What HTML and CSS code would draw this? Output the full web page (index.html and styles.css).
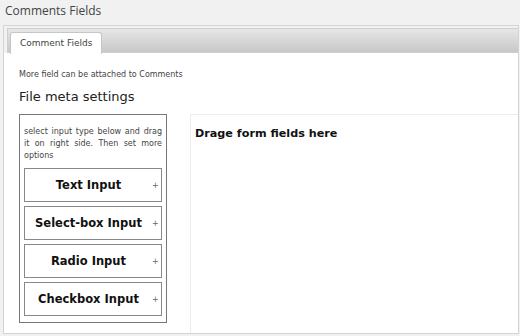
FILE: index.html
```html
<!DOCTYPE html>
<html lang="en">
<head>
  <meta charset="UTF-8">
  <title>Comments Fields</title>
  <link rel="stylesheet" href="styles.css">
</head>
<body>
  <h1 class="page-title">Comments Fields</h1>

  <div class="wrap">
    <div class="tabs-head">
      <ul class="tabs-nav">
        <li class="tab active">Comment Fields</li>
      </ul>
    </div>

    <div class="panel">
      <p class="note">More field can be attached to Comments</p>
      <h3 class="section-title">File meta settings</h3>

      <div class="builder">
        <div class="field-list">
          <p class="help">select input type below and drag it on right side. Then set more options</p>
          <div class="field-btn"><span class="label">Text Input</span><span class="plus">+</span></div>
          <div class="field-btn"><span class="label">Select-box Input</span><span class="plus">+</span></div>
          <div class="field-btn"><span class="label">Radio Input</span><span class="plus">+</span></div>
          <div class="field-btn"><span class="label">Checkbox Input</span><span class="plus">+</span></div>
        </div>

        <div class="drop-zone">
          <h4>Drage form fields here</h4>
        </div>
      </div>
    </div>
  </div>
</body>
</html>
```

FILE: styles.css
```css
body {
  margin: 0;
  background: #f1f1f1;
  font-family: 'DejaVu Sans', Verdana, sans-serif;
  color: #333;
  overflow: hidden;
}
.page-title {
  margin: 0;
  height: 25px;
  padding-left: 5px;
  font-family: 'Open Sans', sans-serif;
  font-size: 12px;
  font-weight: 400;
  line-height: 21px;
  color: #444;
}
.wrap {
  margin: 0 1px 0 3px;
  height: 307px;
  border: 1px solid #d4d4d4;
  background: #fff;
  overflow: hidden;
}
.tabs-head {
  background: #f1f1f1;
  padding: 2px 0 0 3px;
}
.tabs-nav {
  list-style: none;
  margin: 0;
  height: 21px;
  padding: 2px 2px 0;
  border: 1px solid #cfcfcf;
  border-right: 0;
  background: linear-gradient(#e6e6e6, #c8c8c8);
}
.tab {
  display: inline-block;
  height: 21px;
  padding: 0 9px;
  border: 1px solid #c6c6c6;
  border-bottom: 0;
  border-radius: 3px 3px 0 0;
  background: #fff;
  font-size: 9px;
  line-height: 21px;
  color: #444;
}
.panel {
  padding: 17px 0 0 15px;
}
.note {
  margin: 0;
  font-size: 8px;
  color: #444;
}
.section-title {
  margin: 10px 0 10px;
  font-size: 13px;
  font-weight: 400;
  color: #222;
}
.builder {
  display: flex;
  gap: 23px;
  align-items: flex-start;
}
.field-list {
  width: 138px;
  padding: 11px 4px 6px;
  border: 1px solid #777;
}
.help {
  margin: 0 0 6px;
  font-size: 8px;
  line-height: 12px;
  text-align: justify;
  color: #444;
}
.field-btn {
  display: flex;
  align-items: center;
  height: 32px;
  margin-bottom: 4px;
  border: 1px solid #888;
  background: #fff;
}
.field-btn:last-child {
  margin-bottom: 0;
}
.field-btn .label {
  flex: 1;
  text-align: center;
  font-size: 11.5px;
  font-weight: 700;
  color: #111;
}
.field-btn .plus {
  width: 6px;
  margin-right: 3px;
  font-size: 8px;
  color: #666;
}
.drop-zone {
  flex: 1;
  height: 220px;
  padding: 12px 4px 0;
  border-top: 1px solid #ececec;
  border-left: 1px solid #ececec;
}
.drop-zone h4 {
  margin: 0;
  font-size: 11.2px;
  font-weight: 700;
  color: #111;
}
```
